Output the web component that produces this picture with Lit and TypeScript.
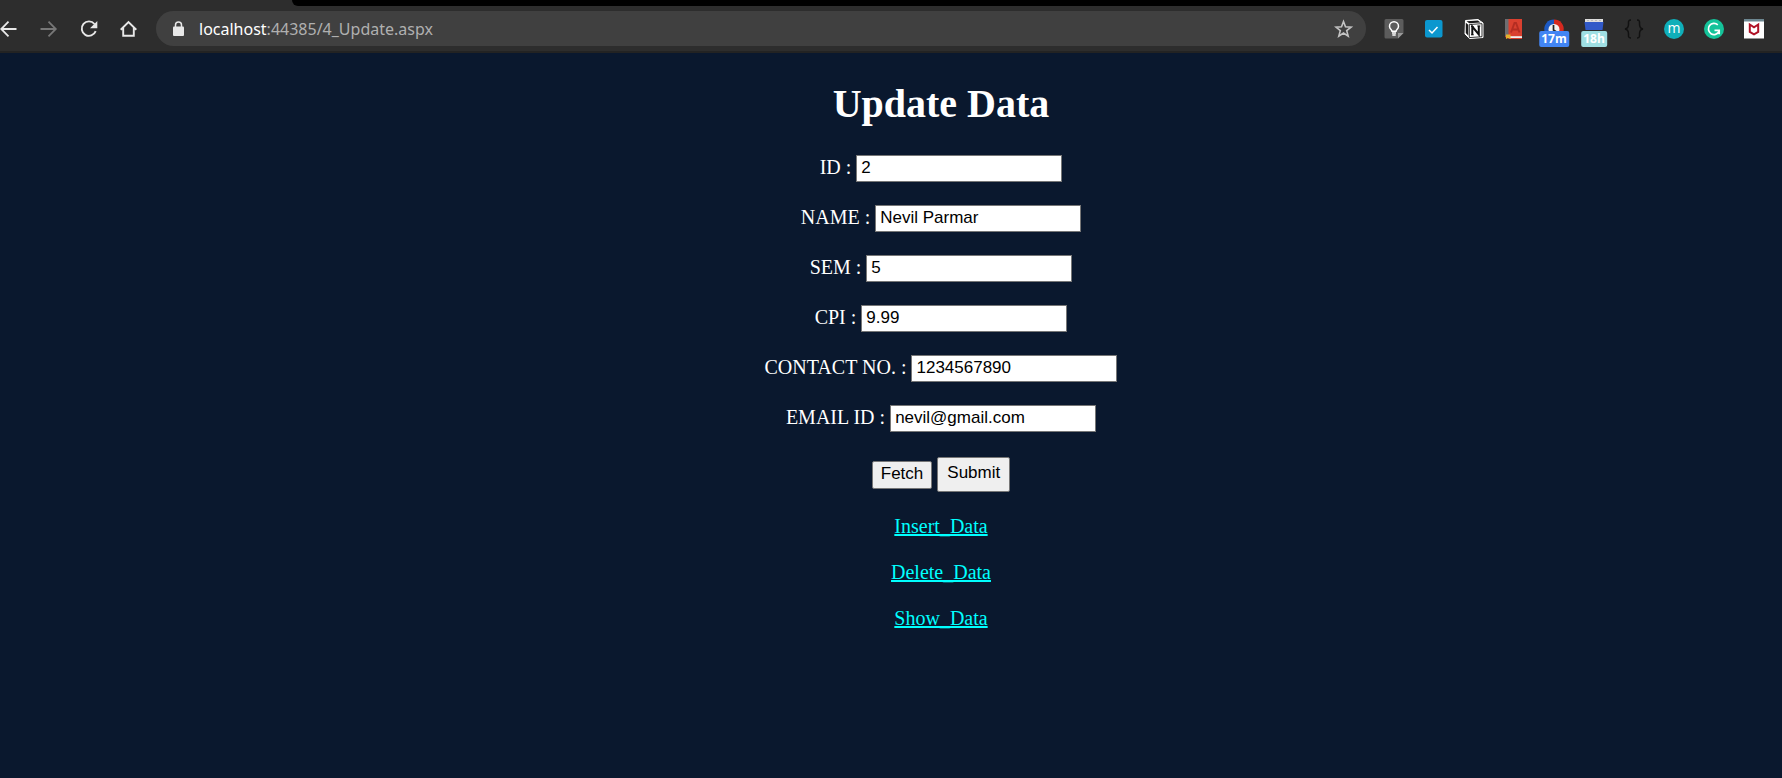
import { LitElement, html, css, svg } from "lit";
import { customElement } from "lit/decorators.js";

const icon = (body: unknown, size = 20, box = 20) =>
  html`<svg width=${size} height=${size} viewBox="0 0 ${box} ${box}" fill="none" aria-hidden="true">${body}</svg>`;

const back = svg`<path d="M16.500 10H1.500M8.500 2.700 1.200 10l7.300 7.300" stroke="#e8e8e8" stroke-width="1.800"/>`;
const forward = svg`<path d="M.5 10h15M8.500 2.700 15.800 10l-7.300 7.300" stroke="#777" stroke-width="1.800"/>`;
const reload = svg`<path d="M14.500 5A7.200 7.200 0 1 0 15.700 12.200" stroke="#e8e8e8" stroke-width="1.900"/><path d="M17.300 2v7.300H10Z" fill="#e8e8e8"/>`;
const home = svg`<path d="M.7 10.700 8.500 3l7.800 7.700M3.200 9v7.700h10.600V9" stroke="#e8e8e8" stroke-width="1.900"/>`;
const lock = svg`<rect x="5" y="7.500" width="11" height="9.500" rx="1" fill="#e8e8e8"/><path d="M7.500 8V6a3 3 0 0 1 6 0v2" stroke="#e8e8e8" stroke-width="1.500"/>`;
const star = svg`<path d="m9.500 2.500 2 5.300 5.600.3-4.400 3.500 1.500 5.500L9.500 14l-4.700 3.100 1.500-5.500L1.900 8.100l5.600-.3Z" stroke="#c4c4c4" stroke-width="1.600"/>`;

const keep = svg`<path d="M2 0h16a1.500 1.500 0 0 1 1.500 1.500V14L14 19.500H2A1.500 1.500 0 0 1 .5 18V1.500A1.500 1.500 0 0 1 2 0Z" fill="#5c5c5c"/><path d="M19.500 14 14 19.500V14Z" fill="#999"/><path d="M8 12.200c0-1.600-2.500-2-2.500-5a4.500 4.500 0 0 1 9 0c0 3-2.500 3.400-2.500 5ZM8 14h4M8.300 16h3.400" stroke="#fff" stroke-width="1.500"/>`;
const todo = svg`<rect x="1" y="1" width="17.500" height="17.500" rx="2" fill="#0b97cf"/><path d="m5 11 3 3 5.500-6" stroke="#fff" stroke-width="1.500"/>`;
const notion = svg`<path d="M1.500 1.500 14 .5l5 3.500v14.500L5.500 19.500 1 15Z" fill="#fff" stroke="#fff"/><path d="M2.500 2.300 13.800 1.500 16.500 3.400 5.300 4.200Z" fill="#1c1c1c"/><path d="M1.800 3.800 4.300 5.800v11L1.800 14Z" fill="#1c1c1c"/><path d="M5.300 5.500 18 4.700v13l-12.700.9Z" stroke="#1c1c1c" stroke-width=".9"/><path d="M8.300 16V7.500l6.500 8V6.800" stroke="#111" stroke-width="2"/><path d="M7 7.500h2.500M13.300 7h3M7 15.800h2.700" stroke="#111"/>`;
const dictionary = svg`<path d="M1 0h17v20H5l-4-2Z" fill="#d9402f"/><path d="M1 0h3.500v17H1Z" fill="#6d6d70"/><path d="M4 17.200h14V19H4Z" fill="#eee"/><path d="m7 13.500 3.500-9.500h1.500l3.500 9.500M8.500 10.500H14" stroke="#b42d22" stroke-width="1.900"/><path d="M2 15.500h4.500V20L4.300 18.700 2 20Z" fill="#e4b22d"/>`;
const timer = svg`<path d="M10 .5A9.500 9.500 0 0 0 .5 12H10Z" fill="#1d5ac4"/><path d="M10 .5A9.500 9.500 0 0 1 19.500 12H10Z" fill="#d5291f"/><circle cx="10" cy="10.500" r="5.500" fill="#f2f2f2"/><path d="M9.500 6v5l3 2" stroke="#222" stroke-width="1.700"/>`;
const calendar = svg`<path d="M1 0h18v3H1Z" fill="#ddd"/><path d="M4 1v1M8 1v1M12 1v1M16 1v1" stroke="#999"/><path d="M.5 3h19l-1 8h-17Z" fill="#3159c8"/>`;
const braces = svg`<path d="M7 1C4 1 4.500 3 4.500 5S4.500 9.500 1 10c3.500.5 3.500 3 3.500 5S4 19 7 19M13 1c3 0 2.500 2 2.500 4s0 4.500 3.500 5c-3.500.5-3.500 3-3.500 5s.5 4-2.500 4" stroke="#111" stroke-width="1.500"/>`;
const grammar = svg`<circle cx="10" cy="10" r="10" fill="#15c39a"/><path d="M13.800 5.800A5.600 5.600 0 1 0 15 12.500M10.500 11.300h4.700v4" stroke="#fff" stroke-width="1.700"/>`;
const shield = svg`<path d="M0 0h20v19.500H0Z" fill="#fff"/><path d="M0 0h20v2.500H0Z" fill="#6d8791"/><path d="M5.800 5.500v7.500l4.200 2.300 4.200-2.300V5.500L10 8.300Z" stroke="#b01226" stroke-width="2"/>`;

const extensions = [
  { name: "Notes", glyph: keep },
  { name: "Tasks", glyph: todo },
  { name: "Clipper", glyph: notion },
  { name: "Dictionary", glyph: dictionary },
  { name: "Timer", glyph: timer, badge: "17m", tone: "blue" },
  { name: "Calendar", glyph: calendar, badge: "18h", tone: "aqua" },
  { name: "Code", glyph: braces },
  { name: "Mail", letter: "m" },
  { name: "Writing", glyph: grammar },
  { name: "Protection", glyph: shield },
];

@customElement("browser-bar")
export class BrowserBar extends LitElement {
  static styles = css`
    :host { display: block; background: #2d2d2d; border-bottom: 2px solid #232323; font-family: "Open Sans", sans-serif; }
    .strip { height: 6px; margin-left: 292px; background: #000; border-bottom-left-radius: 6px; }
    .bar { display: flex; align-items: center; padding: 5px 18px 5px 0; }
    .nav { display: flex; gap: 20px; margin-right: 16px; }
    button { display: grid; place-items: center; width: 20px; height: 20px; padding: 0; border: 0; background: none; }
    svg { display: block; }
    .address { flex: 1; min-width: 0; display: flex; align-items: center; gap: 11px; height: 35px; padding: 0 12px; box-sizing: border-box; border-radius: 18px; background: #404040; }
    .url { flex: 1; font: 16px/24px "Noto Sans", sans-serif; color: #b0b0b0; white-space: nowrap; overflow: hidden; }
    .host { color: #fff; }
    .extensions { display: flex; gap: 20px; margin-left: 18px; }
    .extension { position: relative; }
    .badge { position: absolute; top: 12px; left: 50%; transform: translateX(-50%); padding: 0 2px; border-radius: 2px; font: bold 12px/16px "Open Sans", sans-serif; color: #fff; }
    .blue { background: #4285f4; }
    .aqua { background: #9fdfe3; }
    .disc { display: block; width: 20px; height: 20px; border-radius: 50%; background: #0fafb9; color: #fff; font: 14px/17px "Open Sans", sans-serif; }
  `;
  render() {
    return html`
      <div class="strip"></div>
      <div class="bar">
        <nav class="nav">
          <button aria-label="Back">${icon(back)}</button>
          <button aria-label="Forward">${icon(forward)}</button>
          <button aria-label="Reload">${icon(reload)}</button>
          <button aria-label="Home">${icon(home)}</button>
        </nav>
        <div class="address">
          ${icon(lock)}
          <span class="url"><span class="host">localhost</span>:44385/4_Update.aspx</span>
          <button aria-label="Bookmark">${icon(star)}</button>
        </div>
        <div class="extensions">
          ${extensions.map((e) => html`<button class="extension" aria-label=${e.name}>
            ${e.letter ? html`<span class="disc">${e.letter}</span>` : icon(e.glyph)}
            ${e.badge ? html`<span class="badge ${e.tone}">${e.badge}</span>` : ""}
          </button>`)}
        </div>
      </div>`;
  }
}

const fields = [
  { id: "id", label: "ID", value: "2" },
  { id: "name", label: "NAME", value: "Nevil Parmar" },
  { id: "sem", label: "SEM", value: "5" },
  { id: "cpi", label: "CPI", value: "9.99" },
  { id: "contact", label: "CONTACT NO.", value: "1234567890" },
  { id: "email", label: "EMAIL ID", value: "nevil@gmail.com" },
];

@customElement("app-root")
export class AppRoot extends LitElement {
  static styles = css`
    :host { display: flex; flex-direction: column; min-height: 100vh; background: #0a182e; color: #fff; font: 20px/23px "Liberation Serif", serif; }
    main { display: flex; flex-direction: column; align-items: center; padding: 28px 0 28px 100px; }
    h1 { margin: 0; font-size: 40px; line-height: 46px; }
    form { display: flex; flex-direction: column; align-items: center; gap: 23px; margin-top: 28px; }
    .field { display: flex; gap: 5px; }
    .field label { padding-top: 1px; }
    .field input { box-sizing: border-box; width: 206px; height: 27px; padding: 0 4px 2px; border: 1px solid #767676; background: #fff; color: #000; font: 17px/20px "Liberation Sans", sans-serif; }
    .actions { display: flex; align-items: center; gap: 5px; margin-top: 2px; }
    .actions button { box-sizing: border-box; height: 28px; padding: 0 8px 2px; border: 1px solid #767676; border-radius: 2px; background: #efefef; color: #000; font: 17px/20px "Liberation Sans", sans-serif; }
    .actions .submit { height: 35px; padding: 0 9px 3px; }
    .links { display: flex; flex-direction: column; align-items: center; gap: 23px; margin-top: 23px; }
    a { color: #0ff; text-decoration-thickness: 2px; }
  `;
  render() {
    return html`
      <browser-bar></browser-bar>
      <main>
        <h1>Update Data</h1>
        <form @submit=${(e: Event) => e.preventDefault()}>
          ${fields.map((f) => html`<div class="field"><label for=${f.id}>${f.label} :</label><input id=${f.id} type="text" .value=${f.value} /></div>`)}
          <div class="actions">
            <button type="button">Fetch</button>
            <button type="submit" class="submit">Submit</button>
          </div>
        </form>
        <nav class="links">
          <a href="#insert">Insert_Data</a>
          <a href="#delete">Delete_Data</a>
          <a href="#show">Show_Data</a>
        </nav>
      </main>`;
  }
}
